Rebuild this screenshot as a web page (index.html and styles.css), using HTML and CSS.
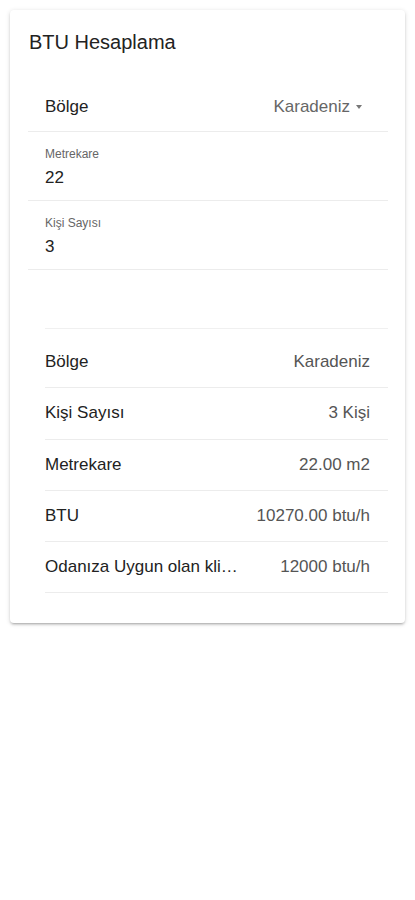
FILE: index.html
```html
<!DOCTYPE html>
<html>
<head>
    <title>BTU Hesaplama</title>
    <link rel="stylesheet" href="styles.css">
</head>
<body>
    <div class="card">
        <div class="card-title">BTU Hesaplama</div>

        <div class="form">
            <div class="select-row">
                <span class="select-label">Bölge</span>
                <span class="select-value">Karadeniz<span class="caret"></span></span>
            </div>
            <div class="field">
                <span class="field-label">Metrekare</span>
                <span class="field-value">22</span>
            </div>
            <div class="field">
                <span class="field-label">Kişi Sayısı</span>
                <span class="field-value">3</span>
            </div>
        </div>

        <div class="results">
            <div class="row">
                <span class="row-label">Bölge</span>
                <span class="row-value">Karadeniz</span>
            </div>
            <div class="row">
                <span class="row-label">Kişi Sayısı</span>
                <span class="row-value">3 Kişi</span>
            </div>
            <div class="row">
                <span class="row-label">Metrekare</span>
                <span class="row-value">22.00 m2</span>
            </div>
            <div class="row">
                <span class="row-label">BTU</span>
                <span class="row-value">10270.00 btu/h</span>
            </div>
            <div class="row">
                <span class="row-label">Odanıza Uygun olan klima</span>
                <span class="row-value">12000 btu/h</span>
            </div>
        </div>
    </div>
</body>
</html>
```

FILE: styles.css
```css
body {
    font-family: "Liberation Sans", Arial, sans-serif;
    margin: 0;
    padding: 10px;
    background-color: #fff;
    color: #222;
}

.card {
    width: 395px;
    box-sizing: border-box;
    padding: 20px 17px 30px 18px;
    background-color: #fff;
    border-radius: 4px;
    box-shadow: 0 2px 2px rgba(0, 0, 0, 0.12), 0 3px 1px -2px rgba(0, 0, 0, 0.1), 0 1px 5px rgba(0, 0, 0, 0.14);
}

.card-title {
    font-size: 20px;
    line-height: 24px;
    padding-left: 1px;
    color: #222;
}

.form {
    margin-top: 29px;
}

.select-row {
    display: flex;
    align-items: center;
    justify-content: space-between;
    height: 48px;
    padding: 0 26px 0 17px;
    border-bottom: 1px solid #ececec;
    font-size: 17px;
}

.select-value {
    color: #666;
    display: flex;
    align-items: center;
}

.caret {
    width: 0;
    height: 0;
    margin-left: 6px;
    border-left: 3.5px solid transparent;
    border-right: 3.5px solid transparent;
    border-top: 4px solid #777;
}

.field {
    display: flex;
    flex-direction: column;
    gap: 5px;
    padding: 14px 17px 11px;
    border-bottom: 1px solid #ececec;
}

.field-label {
    font-size: 12px;
    line-height: 16px;
    color: #666;
}

.field-value {
    font-size: 17px;
    line-height: 22px;
    color: #222;
}

.results {
    margin: 58px 0 0 17px;
    padding-top: 8px;
    border-top: 1px solid #f0f0f0;
}

.row {
    display: flex;
    align-items: center;
    height: 50.3px;
    padding-right: 18px;
    border-bottom: 1px solid #ececec;
    font-size: 17px;
}

.row-label {
    flex: 1;
    min-width: 0;
    white-space: nowrap;
    overflow: hidden;
    text-overflow: ellipsis;
    color: #222;
}

.row-value {
    flex-shrink: 0;
    margin-left: 36px;
    color: #555;
}
```
